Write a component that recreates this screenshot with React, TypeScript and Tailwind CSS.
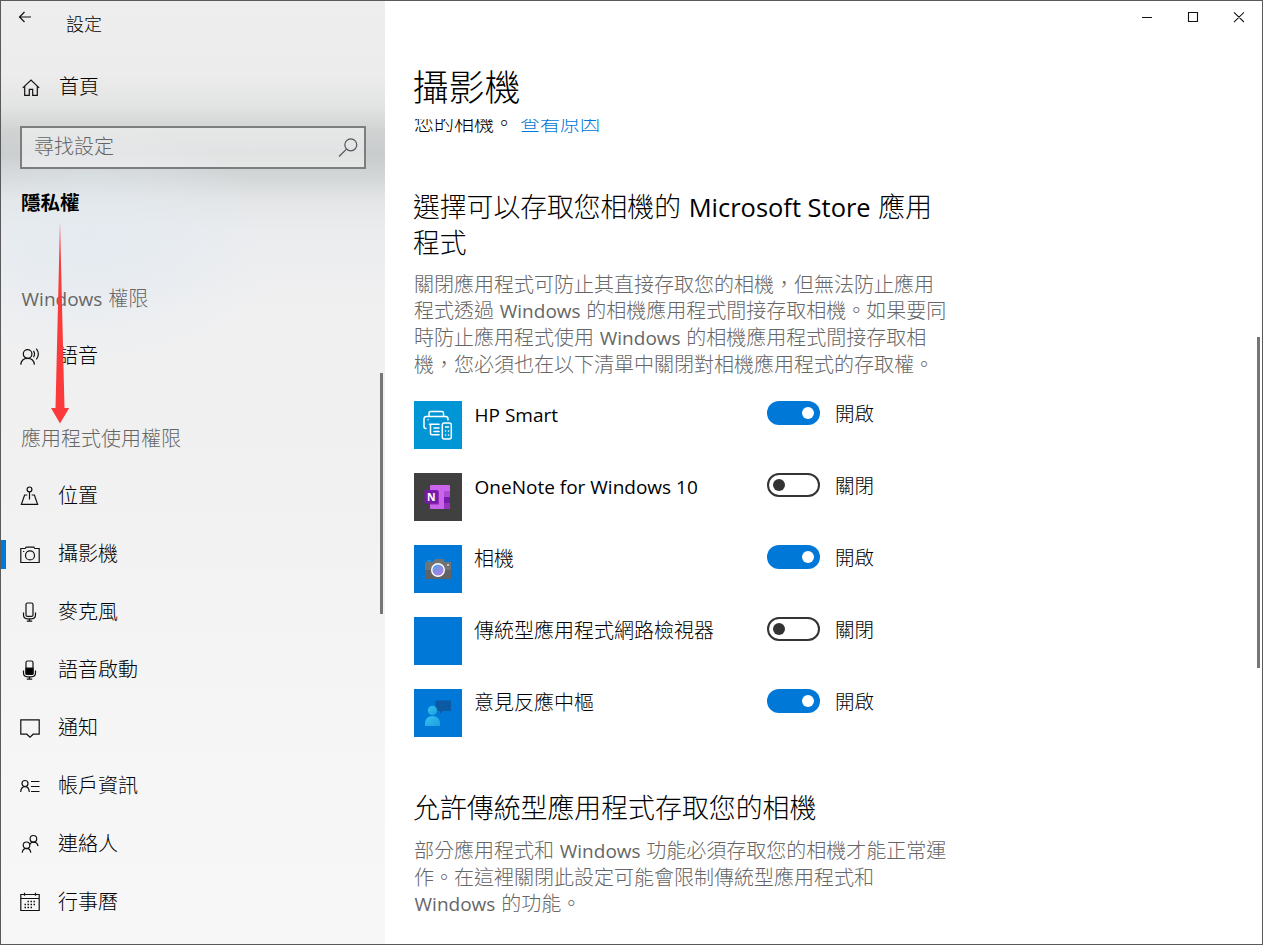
import React from 'react';

const navItems = [
    { id: 1, name: "位置", icon: "location" },
    { id: 2, name: "攝影機", icon: "camera", active: true },
    { id: 3, name: "麥克風", icon: "mic" },
    { id: 4, name: "語音啟動", icon: "micFilled" },
    { id: 5, name: "通知", icon: "message" },
    { id: 6, name: "帳戶資訊", icon: "account" },
    { id: 7, name: "連絡人", icon: "people" },
    { id: 8, name: "行事曆", icon: "calendar" },
];

const apps = [
    { id: 1, name: "HP Smart", icon: "hp", on: true },
    { id: 2, name: "OneNote for Windows 10", icon: "onenote", on: false },
    { id: 3, name: "相機", icon: "camera", on: true },
    { id: 4, name: "傳統型應用程式網路檢視器", icon: "blank", on: false },
    { id: 5, name: "意見反應中樞", icon: "feedback", on: true },
];

const storeTitle = [
    "選擇可以存取您相機的 Microsoft Store 應用",
    "程式",
];

const storeText = [
    "關閉應用程式可防止其直接存取您的相機，但無法防止應用",
    "程式透過 Windows 的相機應用程式間接存取相機。如果要同",
    "時防止應用程式使用 Windows 的相機應用程式間接存取相",
    "機，您必須也在以下清單中關閉對相機應用程式的存取權。",
];

const desktopText = [
    "部分應用程式和 Windows 功能必須存取您的相機才能正常運",
    "作。在這裡關閉此設定可能會限制傳統型應用程式和",
    "Windows 的功能。",
];

// latin words are set a little smaller and heavier than the chinese text around them
const Mixed = ({ text }: { text: string }) => {
    return (
        <>
            {text.split(/([A-Za-z][A-Za-z0-9 ]*[A-Za-z0-9])/).map((part, i) => {
                return i % 2 ? <span key={i} className="mx-[0.03em] text-[0.95em] font-normal">{part}</span> : part
            })}
        </>
    );
};

const NavIcon = ({ name }: { name: string }) => {
    return (
        <svg viewBox="0 0 20 20" className="h-5 w-5 shrink-0" fill="none" stroke="#111" strokeWidth="1.2">
            {name === "home" && <path d="M1.8 10.9 10 3.1l8.2 7.8M3.7 9.500v8.900h4.600v-6h3.400v6h4.600V9.500" />}
            {name === "speech" && (
                <>
                    <circle cx="7.6" cy="8" r="4.3" />
                    <path d="M.8 18.600c.3-3.900 3-6.300 6.800-6.300s6.500 2.400 6.800 6.300M13.500 4.900c1.200 1.800 1.200 4.400 0 6.200M16.300 2.600c2.600 3.400 2.600 7.400 0 10.800" />
                </>
            )}
            {name === "location" && (
                <>
                    <circle cx="9.5" cy="3.4" r="2.4" />
                    <path d="M9.500 5.800v7.700M7.300 9H4.600l-3.200 9.300h16.200L14.400 9h-2.700" />
                </>
            )}
            {name === "camera" && (
                <>
                    <path d="M.8 4.500h4.400l1-1.300h7.600l1 1.300h4.400v14H.8z" />
                    <circle cx="10" cy="11.400" r="4.5" />
                    <path d="M3 7.500h1.300" />
                </>
            )}
            {(name === "mic" || name === "micFilled") && (
                <>
                    <rect x="6" y="1" width="7" height="13.400" rx="1.5" />
                    {name === "micFilled" && <path d="M6 8h7v5.400c0 .6-.4 1-1 1H7c-.6 0-1-.4-1-1z" fill="#000" />}
                    <path d="M3.500 10.500v2.300c0 2.500 1.600 4 4 4h4c2.400 0 4-1.500 4-4v-2.300M9.500 16.800v2.200M6.800 19.200h5.400" />
                </>
            )}
            {name === "message" && <path d="M.8 1.800h18.400v14.400h-6L10 19.200l-3.200-3H.8z" />}
            {name === "account" && (
                <>
                    <circle cx="5" cy="7.5" r="3" />
                    <path d="M.7 16c.2-3.200 1.800-5.400 4.300-5.400s4.100 2.200 4.300 5.400M11 5.500h8.500M11 10.500h8.500M11 15.500h8.500" />
                </>
            )}
            {name === "people" && (
                <>
                    <circle cx="13.400" cy="4.800" r="3.300" />
                    <circle cx="6.500" cy="11.300" r="3.300" />
                    <path d="M2.200 18.700c.3-2.800 1.800-4.400 4.300-4.400s4 1.600 4.300 4.400M9.600 10.500c.7-1.500 2-2.400 3.800-2.400 2.600 0 4.300 1.500 4.600 4" />
                </>
            )}
            {name === "calendar" && (
                <>
                    <path d="M.8 2.500h18.400v16H.8zM.8 6.500h18.400M4.500.8v3M15.500.8v3" />
                    <path d="M7.500 9.500h9M4.500 12.500h12M4.500 15.500h9" strokeDasharray="1.500 1.500" strokeWidth="1.5" />
                </>
            )}
        </svg>
    );
};

const AppIcon = ({ name }: { name: string }) => {
    return (
        <svg viewBox="0 0 48 48" className="h-12 w-12 shrink-0">
            <rect width="48" height="48" fill={name === "hp" ? "#0096d6" : name === "onenote" ? "#404040" : "#0078d7"} />
            {name === "hp" && (
                <g fill="none" stroke="#fff" strokeWidth="1.5" strokeLinejoin="round" strokeLinecap="round">
                    <path d="M15 15v-3q0-1.500 1.500-1.500h11.500q1.500 0 1.500 1.500v3M12 27.500q-2 0-2-2V18q0-2.500 2.500-2.500h19q2.500 0 2.500 2.500v1M15.500 23.300H25M16.500 23.500v9q0 1.300 1.300 1.300H25M20 27h5M20 30.400h5" />
                    <rect x="28.300" y="22" width="9" height="16" rx="2" />
                    <path d="M31.500 26h3M31.500 30h.1M34.500 30h.1M31.500 34h.1M34.500 34h.1M14 18.800h.1" />
                </g>
            )}
            {name === "onenote" && (
                <>
                    <rect x="16" y="12" width="20" height="24" rx="1" fill="#ca64ea" />
                    <path d="M30 18h6v6h-6z" fill="#ae4bd5" />
                    <path d="M30 24h6v6h-6z" fill="#7719aa" />
                    <path d="M30 30h6v5q0 1-1 1h-5z" fill="#9332bf" />
                    <rect x="16" y="18" width="9" height="13.500" fill="#9030b5" />
                    <rect x="10.500" y="17" width="13.500" height="13.500" rx="1" fill="#7719aa" />
                    <text x="17.200" y="27.500" textAnchor="middle" fill="#fff" fontSize="10.500" fontWeight="700" fontFamily="Open Sans">N</text>
                </>
            )}
            {name === "camera" && (
                <>
                    <defs>
                        <linearGradient id="lens" x1="0" y1="0" x2="0.6" y2="1">
                            <stop offset="0" stopColor="#4aa8e8" />
                            <stop offset="1" stopColor="#b07be0" />
                        </linearGradient>
                    </defs>
                    <rect x="13" y="15" width="4" height="3" fill="#1490df" />
                    <path d="M11 17h8l2-3h8l2 3h6v17H11z" fill="#737373" />
                    <path d="M11 25h26v9H11z" fill="#626262" />
                    <circle cx="24" cy="25" r="6.300" fill="url(#lens)" stroke="#fff" strokeWidth="1.4" />
                    <circle cx="34" cy="20" r="1" fill="#ddd" />
                </>
            )}
            {name === "feedback" && (
                <>
                    <defs>
                        <linearGradient id="person" x1="0" y1="0" x2="1" y2="1">
                            <stop offset="0" stopColor="#35c1f1" />
                            <stop offset="1" stopColor="#1c9fdf" />
                        </linearGradient>
                    </defs>
                    <path d="M21.500 11.500H37V22h-8.500L26 25v-3h-4.500z" fill="#0c59a4" />
                    <circle cx="18.500" cy="21.500" r="4.700" fill="url(#person)" />
                    <path d="M11 37v-2.500c0-4.500 3-7.500 7.500-7.500s7.500 3 7.500 7.500V37z" fill="url(#person)" />
                </>
            )}
        </svg>
    );
};

const Toggle = ({ on }: { on: boolean }) => {
    return on ? (
        <div className="flex h-6 w-[53px] items-center justify-end rounded-full bg-[#0078d7] pr-1.5">
            <span className="h-3 w-3 rounded-full bg-white"></span>
        </div>
    ) : (
        <div className="flex h-6 w-[53px] items-center rounded-full border-2 border-[#333] pl-1">
            <span className="h-3 w-3 rounded-full bg-[#333]"></span>
        </div>
    );
};

const NavRow = ({ name, icon, active }: { name: string; icon: string; active?: boolean }) => {
    return (
        <li className="flex h-[58px] items-center">
            <span className={active ? "h-[29px] w-1.5 bg-[#0078d7]" : "h-[29px] w-1.5"}></span>
            <span className="ml-3.5 flex">
                <NavIcon name={icon} />
            </span>
            <span className="ml-[18px]">{name}</span>
        </li>
    );
};

const Sidebar = () => {
    return (
        <div className="w-[385px] shrink-0 bg-[radial-gradient(190px_120px_at_90px_245px,#e2eaf1cc,#e2eaf100),linear-gradient(180deg,#eeeeee_0px,#ececec_75px,#e3e4e4_105px,#d0d2d2_132px,#c9cccd_155px,#d4d7d8_178px,#e3e5e6_200px,#ebecee_230px,#f0f0f1_310px,#f0f0f0_420px,#f3f3f4_600px,#f6f6f6_780px,#f7f7f7_945px)]">
            <div className="flex h-12 items-center text-lg">
                <svg viewBox="0 0 14 12" className="-mt-[15px] ml-[18px] h-3 w-3.5" fill="none" stroke="#111" strokeWidth="1.2">
                    <path d="M13 6H1.500M6.500 1l-5 5 5 5" />
                </svg>
                <span className="ml-[34px]">設定</span>
            </div>
            <div className="mt-2.5 flex h-[58px] items-center pl-[21px]">
                <NavIcon name="home" />
                <span className="ml-[18px]">首頁</span>
            </div>
            <div className="ml-5 mt-2.5 flex h-[43px] w-[346px] items-center justify-between border-2 border-[#7d7d7d] bg-white/45 pl-3 pr-1.5 text-[#666]">
                <span>尋找設定</span>
                <svg viewBox="0 0 20 20" className="h-5 w-5" fill="none" stroke="#555" strokeWidth="1.2">
                    <circle cx="12.800" cy="6.800" r="6" />
                    <path d="M8.500 11.100 1 18.500" />
                </svg>
            </div>
            <div className="mt-[17px] flex h-[34px] items-center pl-[21px] text-[19.5px] font-bold">隱私權</div>
            <div className="mt-[59px] flex h-10 items-center pl-[21px] text-[#666]">
                <span><Mixed text="Windows 權限" /></span>
            </div>
            <ul className="mt-2">
                <NavRow name="語音" icon="speech" />
            </ul>
            <div className="mt-[34px] flex h-10 items-center pl-[21px] text-[#666]">應用程式使用權限</div>
            <ul className="mt-2">
                {navItems.map(item => {
                    return <NavRow key={item.id} name={item.name} icon={item.icon} active={item.active} />
                })}
            </ul>
        </div>
    );
};

const App = () => {
    return (
        <div lang="zh-Hant" className="relative flex h-[945px] w-[1263px] overflow-hidden whitespace-nowrap bg-white font-['Open_Sans','Noto_Sans_CJK_TC',sans-serif] text-[20px] font-light leading-[26.6px] text-black">
            <Sidebar />
            <div className="grow pl-[29px]">
                <div className="flex h-[119px] justify-between">
                    <h1 className="-ml-[1.5px] mt-[66px] text-[36px] leading-[44px]">攝影機</h1>
                    <svg viewBox="0 0 102 12" className="mr-[19px] mt-[11px] h-3 w-[102px]" fill="none" stroke="#111" strokeWidth="1.1">
                        <path d="M0 6.500h10M46.500 1.500h9v9h-9zM92 1.300l10 9.800M102 1.300l-10 9.800" />
                    </svg>
                </div>
                {/* first line is scrolled half way under the title */}
                <div className="h-[70px] overflow-hidden">
                    <p className="-mt-2">您的相機。<a className="ml-[6px] text-[#0078d7]">查看原因</a></p>
                </div>
                <h2 className="-ml-px text-[26.8px] leading-9">
                    {storeTitle.map(line => <span key={line} className="block h-9"><Mixed text={line} /></span>)}
                </h2>
                <p className="mt-[10.8px] text-[#666]">
                    {storeText.map(line => <span key={line} className="block h-[26.6px]"><Mixed text={line} /></span>)}
                </p>
                <ul className="mt-[22.8px] flex flex-col gap-6">
                    {apps.map(app => {
                        return <li key={app.id} className="flex h-12">
                            <AppIcon name={app.icon} />
                            <span className="ml-3 mt-px w-[293px]"><Mixed text={app.name} /></span>
                            <Toggle on={app.on} />
                            <span className="ml-[15px] text-[19.5px]">{app.on ? "開啟" : "關閉"}</span>
                        </li>
                    })}
                </ul>
                <h2 className="-ml-px mt-[53px] text-[26.9px] leading-9">允許傳統型應用程式存取您的相機</h2>
                <p className="mt-3 text-[#666]">
                    {desktopText.map(line => <span key={line} className="block h-[26.6px]"><Mixed text={line} /></span>)}
                </p>
            </div>

            {/* scroll bars */}
            <div className="absolute left-[380px] top-[373px] h-[241px] w-[3px] bg-[#767676]"></div>
            <div className="absolute left-[1257px] top-[337px] h-[331px] w-[3px] bg-[#767676]"></div>

            <svg viewBox="0 0 20 202" className="absolute left-[50px] top-[222px] h-[202px] w-5">
                <path d="M10 0l4.500 186h4.700L10 201.500 1 186h4.500z" fill="#fb3b3b" />
            </svg>

            <div className="pointer-events-none absolute inset-0 border border-[#5a5a5a]"></div>
        </div>
    );
};

export default App;
